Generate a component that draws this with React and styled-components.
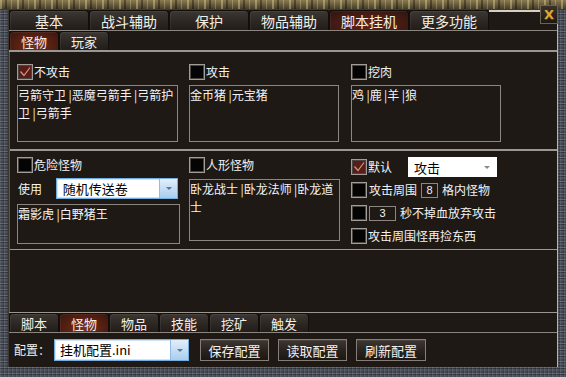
import React from 'react';
import styled, { createGlobalStyle, css } from 'styled-components';

const Global = createGlobalStyle`
  html, body { margin: 0; padding: 0; background: #1f1915; }
  body { width: 566px; height: 377px; overflow: hidden; font-family: "Noto Sans CJK SC", "Noto Sans", sans-serif; }
  * { box-sizing: border-box; }
`;

const Frame = styled.div`
  position: relative;
  width: 566px;
  height: 377px;
  padding: 10px 8px 10px 8px;
  background:
    repeating-linear-gradient(90deg, rgba(255,235,170,.35) 0 2px, transparent 2px 5px, rgba(0,0,0,.35) 5px 7px, transparent 7px 11px, rgba(255,240,190,.25) 11px 12px, transparent 12px 17px) top / 100% 9px no-repeat,
    linear-gradient(#8a7a50, #5c5236 60%, #3e3626) top / 100% 10px no-repeat,
    repeating-linear-gradient(90deg, rgba(255,255,255,.08) 0 1px, transparent 1px 3px, rgba(0,0,0,.15) 3px 4px),
    repeating-linear-gradient(0deg, #4e535d 0 2px, #353942 2px 3px, #626770 3px 4px, #41454e 4px 6px);
`;

const CloseButton = styled.div`
  position: absolute;
  left: 540px;
  top: 5px;
  width: 18px;
  height: 19px;
  border: 1px solid #6c6254;
  background: linear-gradient(#3a322a, #1c1814);
  color: #dba63a;
  font: bold 13px/17px "DejaVu Sans", sans-serif;
  text-align: center;
  text-shadow: 0 1px 0 #5a3a10;
`;

const Panel = styled.div`
  width: 550px;
  height: 357px;
  display: flex;
  flex-direction: column;
  background: #1f1915;
  border-right: 1px solid #b8b4ae;
  border-left: 1px solid #3a3632;
`;

const TabRow = styled.div`
  display: flex;
  height: ${p => p.$h}px;
  background: #1f1915;
  ${p => p.$top && css`border-bottom: 1px solid #8a857f;`}
  ${p => p.$under && css`border-bottom: 2px solid #9c9690;`}
  ${p => p.$bottom && css`
    border-top: 1px solid #9c9690;
    border-bottom: 1px solid #8a857f;
  `}
  box-sizing: content-box;
`;

const Tab = styled.div`
  width: ${p => p.$w}px;
  height: 100%;
  display: flex;
  align-items: center;
  justify-content: center;
  font-size: ${p => p.$fs}px;
  color: #f3efe8;
  border: 1px solid #120e0b;
  border-bottom: none;
  border-radius: 4px 4px 0 0;
  background: linear-gradient(#3d3733, #2b2622 60%, #221d1a);
  box-shadow: inset 1px 1px 0 rgba(255,255,255,.06);
  ${p => p.$active && css`
    background: radial-gradient(ellipse at 50% 80%, #7a3118 0%, #5a2212 45%, #3a1610 100%);
  `}
  ${p => p.$activeTop && css`
    background: radial-gradient(ellipse at 50% 70%, #5e2418 0%, #4a1c14 50%, #2e1510 100%);
  `}
`;

const TabFiller = styled.div`
  flex: 1;
  ${p => p.$line && css`border-top: 2px solid #d6d0c4;`}
`;

const Main = styled.div`
  height: 260px;
  display: flex;
  flex-direction: column;
  border-left: 1px solid #5a5550;
`;

const Section = styled.div`
  display: grid;
  grid-template-columns: 161px 151px 150px;
  column-gap: 11px;
  padding: ${p => p.$pt}px 0 0 7px;
  height: ${p => p.$h}px;
  box-sizing: content-box;
  border-bottom: ${p => p.$bb}px solid #9c9690;
`;

const Col = styled.div`
  display: flex;
  flex-direction: column;
  gap: ${p => p.$gap || 5}px;
`;

const Row = styled.div`
  display: flex;
  align-items: center;
  height: ${p => p.$h || 16}px;
  gap: ${p => p.$gap || 1}px;
  font-size: 12px;
  color: #f2f2f2;
  white-space: nowrap;
`;

const Box = styled.span`
  width: 16px;
  height: 16px;
  flex: none;
  border: 1px solid #a29c96;
  box-shadow: inset 0 0 0 1px #4a4540;
  background: ${p => (p.$on ? '#5a1c16' : '#050404')};
  display: flex;
  align-items: center;
  justify-content: center;
`;

const Label = styled.span`
  font-size: 12px;
  color: #f2f2f2;
  line-height: 16px;
  ${p => p.$w && css`width: ${p.$w}px;`}
  ${p => p.$ml && css`margin-left: ${p.$ml}px;`}
`;

const TextBox = styled.div`
  height: ${p => p.$h}px;
  width: ${p => p.$w || '100%'};
  border: 1px solid #8c8680;
  font-size: 12px;
  line-height: 18px;
  color: #f4f4f4;
  word-break: break-all;
  padding: 0;
  overflow: hidden;
`;

const SelectBox = styled.div`
  display: flex;
  width: ${p => p.$w}px;
  height: ${p => p.$h}px;
  background: #fff;
  border: 1px solid ${p => (p.$blue ? '#74ade2' : '#ffffff')};
  ${p => p.$blue && css`box-shadow: inset 0 0 0 1px #cfe4f7;`}
  ${p => p.$ml && css`margin-left: ${p.$ml}px;`}
`;

const SelectText = styled.span`
  flex: 1;
  color: #000;
  font-size: 13px;
  line-height: ${p => p.$lh}px;
  padding-left: ${p => p.$pl || 6}px;
  white-space: nowrap;
`;

const DropBtn = styled.span`
  width: 18px;
  display: flex;
  align-items: center;
  justify-content: center;
  ${p => p.$blue && css`
    background: linear-gradient(#e2eefa, #a9cdee);
    border-left: 1px solid #8fbbe4;
  `}
`;

const Arrow = styled.span`
  width: 0;
  height: 0;
  border-left: 3px solid transparent;
  border-right: 3px solid transparent;
  border-top: 3px solid ${p => p.$c};
`;

const NumBox = styled.span`
  width: ${p => p.$w}px;
  height: 15px;
  border: 1px solid #8c8680;
  color: #f2f2f2;
  font: 11px/13px "Liberation Sans", sans-serif;
  text-align: center;
  margin: 0 ${p => p.$mr || 3}px 0 ${p => p.$ml || 3}px;
`;

const BottomSpace = styled.div`
  flex: 1;
`;

const Toolbar = styled.div`
  height: 34px;
  display: flex;
  align-items: center;
  padding-left: 5px;
`;

const Button = styled.div`
  width: ${p => p.$w || 69}px;
  height: 22px;
  margin-left: ${p => p.$ml}px;
  border: 1px solid #857d76;
  background: linear-gradient(#3e3631, #2a2420 50%, #1c1714);
  color: #f2f2f2;
  font-size: 13px;
  display: flex;
  align-items: center;
  justify-content: center;
  box-shadow: inset 0 1px 0 rgba(255,255,255,.08);
`;

const Check = ({ on }) => (
  <Box $on={on}>
    {on && (
      <svg width="12" height="12" viewBox="0 0 12 12">
        <polyline points="1.5,5.5 5,9.5 11,1.5" fill="none" stroke="#c99a88" strokeWidth="1.2" />
      </svg>
    )}
  </Box>
);

const piped = items => items.join('\u2009|');

const topTabs = ['基本', '战斗辅助', '保护', '物品辅助', '脚本挂机', '更多功能'];
const bottomTabs = ['脚本', '怪物', '物品', '技能', '挖矿', '触发'];

export default function App() {
  return (
    <>
      <Global />
      <Frame>
        <CloseButton>X</CloseButton>
        <Panel>
          <TabRow $h={20} $top>
            {topTabs.map(t => (
              <Tab key={t} $w={80} $fs={14} $activeTop={t === '脚本挂机'}>{t}</Tab>
            ))}
            <TabFiller $line />
          </TabRow>
          <TabRow $h={19} $under>
            <Tab $w={50} $fs={13} $active>怪物</Tab>
            <Tab $w={50} $fs={13}>玩家</Tab>
            <TabFiller />
          </TabRow>
          <Main>
            <Section $pt={12} $h={85} $bb={2}>
              <Col>
                <Row><Check on /><Label>不攻击</Label></Row>
                <TextBox $h={57}>{piped(['弓箭守卫', '恶魔弓箭手', '弓箭护卫', '弓箭手'])}</TextBox>
              </Col>
              <Col>
                <Row><Check /><Label>攻击</Label></Row>
                <TextBox $h={57} $w="150px">{piped(['金币猪', '元宝猪'])}</TextBox>
              </Col>
              <Col>
                <Row><Check /><Label>挖肉</Label></Row>
                <TextBox $h={57}>{piped(['鸡', '鹿', '羊', '狼'])}</TextBox>
              </Col>
            </Section>
            <Section $pt={6} $h={92} $bb={1}>
              <Col $gap={5}>
                <Row><Check /><Label>危险怪物</Label></Row>
                <Row $h={21} $gap={0}>
                  <Label $w={37} $ml={1}>使用</Label>
                  <SelectBox $w={123} $h={21} $blue>
                    <SelectText $lh={19}>随机传送卷</SelectText>
                    <DropBtn $blue><Arrow $c="#5c7896" /></DropBtn>
                  </SelectBox>
                </Row>
                <TextBox $h={40} $w="163px">{piped(['霜影虎', '白野猪王'])}</TextBox>
              </Col>
              <Col $gap={6}>
                <Row><Check /><Label>人形怪物</Label></Row>
                <TextBox $h={62}>{piped(['卧龙战士', '卧龙法师', '卧龙道士'])}</TextBox>
              </Col>
              <Col $gap={3}>
                <Row $h={20}>
                  <Check on /><Label $w={39}>默认</Label>
                  <SelectBox $w={89} $h={20}>
                    <SelectText $lh={19} $pl={5}>攻击</SelectText>
                    <DropBtn><Arrow $c="#8a8a8a" /></DropBtn>
                  </SelectBox>
                </Row>
                <Row $h={20} $gap={0}>
                  <Check /><Label $ml={1}>攻击周围</Label>
                  <NumBox $w={17}>8</NumBox>
                  <Label>格内怪物</Label>
                </Row>
                <Row $h={20} $gap={0}>
                  <Check />
                  <NumBox $w={27} $ml={1}>3</NumBox>
                  <Label>秒不掉血放弃攻击</Label>
                </Row>
                <Row $h={20}>
                  <Check /><Label>攻击周围怪再捡东西</Label>
                </Row>
              </Col>
            </Section>
            <BottomSpace />
          </Main>
          <TabRow $h={19} $bottom>
            {bottomTabs.map(t => (
              <Tab key={t} $w={50} $fs={13} $active={t === '怪物'}>{t}</Tab>
            ))}
            <TabFiller />
          </TabRow>
          <Toolbar>
            <Label $w={40}>配置：</Label>
            <SelectBox $w={135} $h={22} $blue>
              <SelectText $lh={20} $pl={5}>挂机配置.ini</SelectText>
              <DropBtn $blue><Arrow $c="#5c7896" /></DropBtn>
            </SelectBox>
            <Button $ml={11}>保存配置</Button>
            <Button $ml={9}>读取配置</Button>
            <Button $ml={9} $w={70}>刷新配置</Button>
          </Toolbar>
        </Panel>
      </Frame>
    </>
  );
}
